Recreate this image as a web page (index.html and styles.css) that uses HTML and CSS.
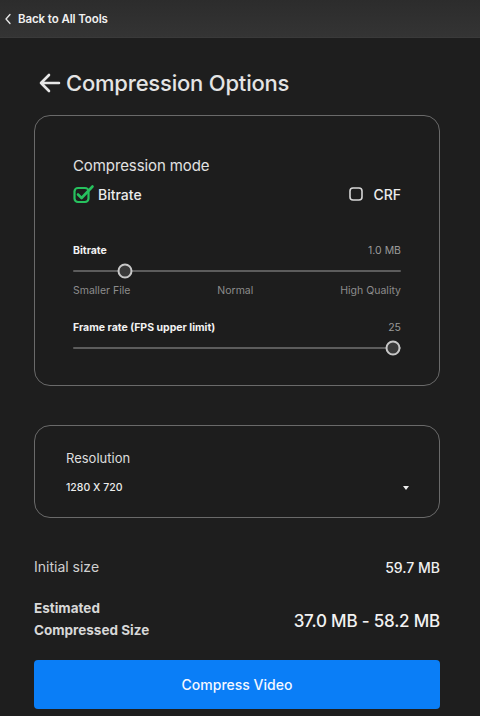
FILE: index.html
```html
<!DOCTYPE html>
<html lang="en">
<head>
<meta charset="utf-8">
<title>Compression Options</title>
<link rel="stylesheet" href="styles.css">
</head>
<body>
<header class="topbar">
  <svg class="chev" width="8" height="12" viewBox="0 0 8 12"><path d="M6 1.5 L2 6 L6 10.5" fill="none" stroke="#e8e8e8" stroke-width="1.3" stroke-linecap="round" stroke-linejoin="round"/></svg>
  <span class="back">Back to All Tools</span>
</header>
<main class="page">
  <h1 class="title">
    <svg class="arrow" width="23" height="20" viewBox="0 0 23 20"><path d="M21 10 H3 M11 2 L3 10 L11 18" fill="none" stroke="#e6e6e6" stroke-width="2.6" stroke-linecap="round" stroke-linejoin="round"/></svg>
    <span>Compression Options</span>
  </h1>

  <section class="card card-mode">
    <div class="mode-title">Compression mode</div>
    <div class="mode-row">
      <label class="opt">
        <svg width="22" height="20" viewBox="0 0 22 20"><rect x="1.5" y="4" width="14" height="14" rx="3.5" fill="none" stroke="#27c15e" stroke-width="2.2"/><path d="M5 10.5 L8.6 14 L19.5 2.5" fill="none" stroke="#27c15e" stroke-width="2.6" stroke-linecap="round" stroke-linejoin="round"/></svg>
        <span class="opt-text">Bitrate</span>
      </label>
      <label class="opt">
        <svg width="14" height="14" viewBox="0 0 14 14"><rect x="1" y="1" width="12" height="12" rx="3" fill="none" stroke="#d6d6d6" stroke-width="1.6"/></svg>
        <span class="opt-text crf">CRF</span>
      </label>
    </div>

    <div class="field field-bitrate">
      <div class="field-head"><span class="field-name">Bitrate</span><span class="field-val">1.0 MB</span></div>
      <div class="slider"><span class="thumb" style="left: 16%"></span></div>
      <div class="scale"><span>Smaller File</span><span>Normal</span><span>High Quality</span></div>
    </div>

    <div class="field field-fps">
      <div class="field-head"><span class="field-name">Frame rate (FPS upper limit)</span><span class="field-val">25</span></div>
      <div class="slider"><span class="thumb" style="left: 97.6%"></span></div>
    </div>
  </section>

  <section class="card card-res">
    <div class="res-title">Resolution</div>
    <div class="res-row"><span>1280 X 720</span><span class="caret"></span></div>
  </section>

  <div class="sum-row">
    <span class="sum-label">Initial size</span>
    <span class="sum-val">59.7 MB</span>
  </div>
  <div class="sum-row est">
    <span class="est-label">Estimated<br>Compressed Size</span>
    <span class="est-val">37.0 MB - 58.2 MB</span>
  </div>

  <button class="btn">Compress Video</button>
</main>
</body>
</html>
```

FILE: styles.css
```css
* { box-sizing: border-box; }
html, body { margin: 0; padding: 0; }
body {
  background: #1e1e1e;
  color: #e8e8e8;
  font-family: Inter, "Noto Sans", "Liberation Sans", sans-serif;
  width: 480px;
  height: 716px;
  overflow: hidden;
}
.topbar {
  height: 38px;
  background: linear-gradient(#2c2c2c, #343434);
  border-bottom: 1px solid #3a3a3a;
  display: flex;
  align-items: center;
  padding-left: 4px;
  gap: 6px;
}
.chev { display: block; }
.back {
  font-size: 11.5px;
  font-weight: 600;
  color: #f0f0f0;
  letter-spacing: -0.1px;
}
.page {
  padding: 0 40px 0 34px;
}
.title {
  margin: 31px 0 0 4px;
  display: flex;
  align-items: center;
  gap: 5px;
  font-size: 22px;
  font-weight: 500;
  color: #e4e4e4;
  height: 28px;
  letter-spacing: -0.2px;
}
.arrow { display: block; }
.card {
  border: 1px solid #6a6a6a;
  border-radius: 16px;
  background: #1d1d1d;
}
.card-mode {
  margin-top: 18px;
  height: 271px;
  padding: 40px 38px 0 38px;
}
.mode-title {
  font-size: 15px;
  color: #e2e2e2;
  line-height: 20px;
  letter-spacing: -0.1px;
}
.mode-row {
  display: flex;
  justify-content: space-between;
  align-items: center;
  margin-top: 8px;
  height: 20px;
}
.opt {
  display: flex;
  align-items: center;
  gap: 3px;
}
.opt svg { display: block; }
.opt-text {
  font-size: 14px;
  font-weight: 500;
  color: #ececec;
}
.crf { margin-left: 7px; }
.field-bitrate { margin-top: 40px; }
.field-fps { margin-top: 23px; }
.field-head {
  display: flex;
  justify-content: space-between;
  align-items: center;
  line-height: 14px;
}
.field-name {
  font-size: 10.5px;
  font-weight: 700;
  color: #f2f2f2;
}
.field-val {
  font-size: 10.5px;
  color: #9a9a9a;
}
.slider {
  position: relative;
  height: 2px;
  background: #5c5c5c;
  margin-top: 12px;
  border-radius: 1px;
}
.thumb {
  position: absolute;
  top: 50%;
  width: 15px;
  height: 15px;
  border-radius: 50%;
  border: 2px solid #c8c8c8;
  background: #3a3a3a;
  transform: translate(-50%, -50%);
}
.scale {
  display: flex;
  justify-content: space-between;
  margin-top: 12px;
  font-size: 10.5px;
  color: #8c8c8c;
  line-height: 14px;
}
.card-res {
  margin-top: 39px;
  height: 93px;
  padding: 23px 28px 0 31px;
}
.res-title {
  font-size: 13px;
  color: #dedede;
  line-height: 18px;
}
.res-row {
  display: flex;
  justify-content: space-between;
  align-items: center;
  margin-top: 14px;
  font-size: 10.5px;
  font-weight: 500;
  color: #ececec;
  line-height: 14px;
}
.caret {
  width: 0;
  height: 0;
  border-left: 3.5px solid transparent;
  border-right: 3.5px solid transparent;
  border-top: 4px solid #eeeeee;
  margin-right: 2px;
}
.sum-row {
  display: flex;
  justify-content: space-between;
  align-items: center;
}
.sum-row:first-of-type { margin-top: 39px; }
.sum-label {
  font-size: 14px;
  color: #d0d0d0;
  line-height: 20px;
}
.sum-val {
  font-size: 14px;
  font-weight: 500;
  color: #f0f0f0;
}
.est { margin-top: 20px; }
.est-label {
  font-size: 13.5px;
  font-weight: 700;
  color: #d8d8d8;
  line-height: 22px;
}
.est-val {
  font-size: 17px;
  font-weight: 500;
  color: #f2f2f2;
  letter-spacing: -0.2px;
  padding-top: 3px;
}
.btn {
  display: block;
  width: 100%;
  margin-top: 19px;
  height: 49px;
  border: 0;
  border-radius: 4px;
  background: #0a7ef7;
  color: #f4f8ff;
  font-family: inherit;
  font-size: 14px;
  font-weight: 500;
}
```
